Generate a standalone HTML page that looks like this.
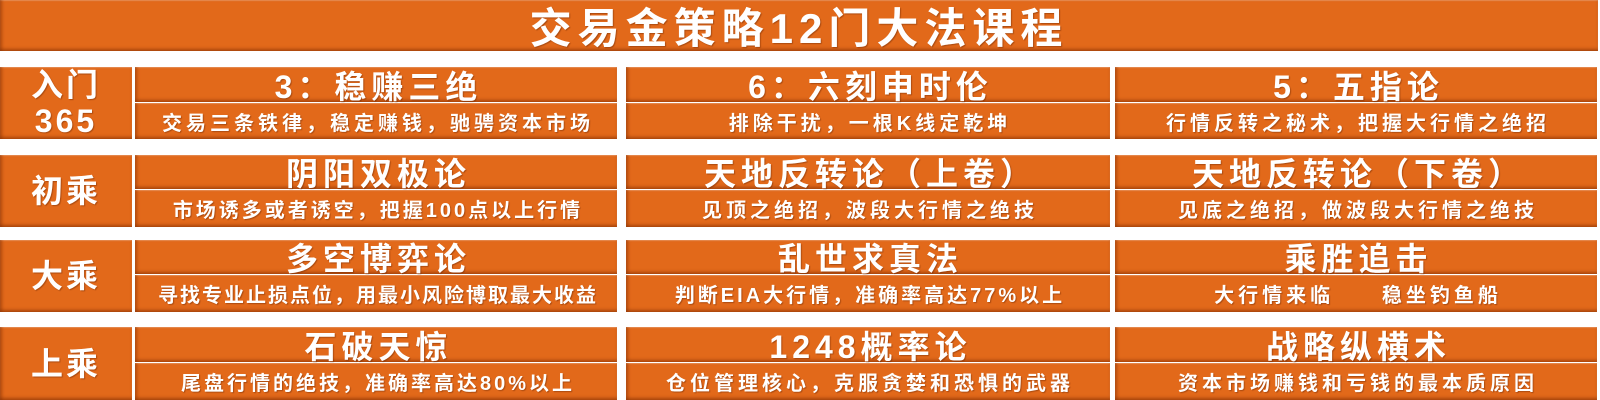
<!DOCTYPE html>
<html><head><meta charset="utf-8"><style>
body{margin:0;width:1600px;height:400px;background:#fff;position:relative;overflow:hidden;font-family:"Liberation Sans","Noto Sans CJK SC",sans-serif;color:#fff;font-weight:bold}
.b{position:absolute;background:#E2691A;box-shadow:inset 3px 0 3px -1px rgba(120,40,0,.45),inset 0 -3px 3px -1px rgba(120,40,0,.5),inset 0 1px 1px rgba(255,200,160,.5);display:flex;align-items:center;justify-content:center;white-space:nowrap;text-shadow:1px 1px 1px rgba(90,30,0,.4)}
.t{font-size:32px;letter-spacing:5px;padding-left:5px;box-sizing:border-box}
.s{font-size:20px;letter-spacing:4px;padding-left:4px;box-sizing:border-box}
.l{font-size:32px;line-height:36px;text-align:center;letter-spacing:3px}
</style></head><body>
<div class="b" style="left:0;top:0;width:1598px;height:51px;font-size:42px;letter-spacing:6px">交易金策略12门大法课程</div>

<div class="b l" style="left:0;top:67px;width:132px;height:72px">入门<br>365</div>
<div class="b l" style="left:0;top:155px;width:132px;height:72px">初乘</div>
<div class="b l" style="left:0;top:240px;width:132px;height:72px">大乘</div>
<div class="b l" style="left:0;top:327px;width:132px;height:73px">上乘</div>

<div class="b t" style="left:135px;top:67px;width:482px;height:35px">3：稳赚三绝</div>
<div class="b s" style="left:135px;top:103px;width:482px;height:36px">交易三条铁律，稳定赚钱，驰骋资本市场</div>
<div class="b t" style="left:626px;top:67px;width:484px;height:35px">6：六刻申时伦</div>
<div class="b s" style="left:626px;top:103px;width:484px;height:36px">排除干扰，一根K线定乾坤</div>
<div class="b t" style="left:1115px;top:67px;width:482px;height:35px">5：五指论</div>
<div class="b s" style="left:1115px;top:103px;width:482px;height:36px">行情反转之秘术，把握大行情之绝招</div>

<div class="b t" style="left:135px;top:155px;width:482px;height:34px">阴阳双极论</div>
<div class="b s" style="left:135px;top:190px;width:482px;height:37px;letter-spacing:3px">市场诱多或者诱空，把握100点以上行情</div>
<div class="b t" style="left:626px;top:155px;width:484px;height:34px">天地反转论（上卷）</div>
<div class="b s" style="left:626px;top:190px;width:484px;height:37px">见顶之绝招，波段大行情之绝技</div>
<div class="b t" style="left:1115px;top:155px;width:482px;height:34px">天地反转论（下卷）</div>
<div class="b s" style="left:1115px;top:190px;width:482px;height:37px">见底之绝招，做波段大行情之绝技</div>

<div class="b t" style="left:135px;top:240px;width:482px;height:34px">多空博弈论</div>
<div class="b s" style="left:135px;top:275px;width:482px;height:37px;letter-spacing:2px">寻找专业止损点位，用最小风险博取最大收益</div>
<div class="b t" style="left:626px;top:240px;width:484px;height:34px">乱世求真法</div>
<div class="b s" style="left:626px;top:275px;width:484px;height:37px;letter-spacing:3px">判断EIA大行情，准确率高达77%以上</div>
<div class="b t" style="left:1115px;top:240px;width:482px;height:34px">乘胜追击</div>
<div class="b s" style="left:1115px;top:275px;width:482px;height:37px">大行情来临&nbsp;&nbsp;&nbsp;&nbsp;&nbsp;稳坐钓鱼船</div>

<div class="b t" style="left:135px;top:327px;width:482px;height:35px">石破天惊</div>
<div class="b s" style="left:135px;top:363px;width:482px;height:37px;letter-spacing:3px">尾盘行情的绝技，准确率高达80%以上</div>
<div class="b t" style="left:626px;top:327px;width:484px;height:35px">1248概率论</div>
<div class="b s" style="left:626px;top:363px;width:484px;height:37px">仓位管理核心，克服贪婪和恐惧的武器</div>
<div class="b t" style="left:1115px;top:327px;width:482px;height:35px">战略纵横术</div>
<div class="b s" style="left:1115px;top:363px;width:482px;height:37px">资本市场赚钱和亏钱的最本质原因</div>
</body></html>
